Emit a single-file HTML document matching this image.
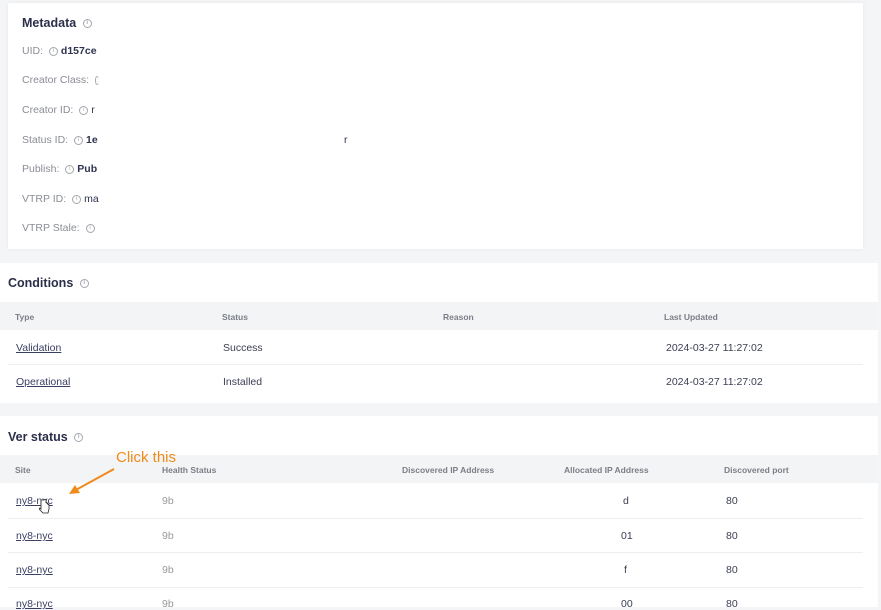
<!DOCTYPE html>
<html><head><style>
body{margin:0;width:881px;height:607px;overflow:hidden;background:#f4f5f6;font-family:"Liberation Sans",sans-serif;position:relative}
.a{position:absolute;white-space:nowrap}
.card{position:absolute;background:#fff}
.lbl{font-size:10.5px;color:#8a8d96}
.val{font-size:10.5px;color:#2e3350}
.i{display:inline-block;width:7px;height:7px;border:1px solid #a4a6ad;border-radius:50%;font-size:6px;line-height:7px;text-align:center;color:#a4a6ad;vertical-align:middle;margin:0 3px}
.h{font-size:12.5px;color:#2b2f4a;font-weight:bold}
.th{font-size:8.5px;color:#7b7e88;font-weight:bold}
.td{font-size:10.5px;color:#3a3e52}
.lnk{font-size:10.5px;color:#3a3e62;text-decoration:underline}
.hdr{position:absolute;background:#f3f4f5}
.line{position:absolute;height:1px;background:#eceef0}
</style></head><body>
<div class="card" style="left:8px;top:3px;width:855px;height:246px;box-shadow:0 0 3px #e6e7e9"></div>
<div class="a h" style="left:22px;top:16px">Metadata <span class="i">i</span></div>
<div class="a lbl" style="left:22px;top:45px">UID: <span class="i">i</span><span class="val" style="font-weight:bold">d157ce</span></div>
<div class="a lbl" style="left:22px;top:74px">Creator Class: <span class="i" style="border-right:none;width:3px"></span></div>
<div class="a lbl" style="left:22px;top:104px">Creator ID: <span class="i">i</span><span class="val">r</span></div>
<div class="a lbl" style="left:22px;top:134px">Status ID: <span class="i">i</span><span class="val" style="font-weight:bold">1e</span></div>
<div class="a val" style="left:344px;top:134px">r</div>
<div class="a lbl" style="left:22px;top:163px">Publish: <span class="i">i</span><span class="val" style="font-weight:bold">Pub</span></div>
<div class="a lbl" style="left:22px;top:193px">VTRP ID: <span class="i">i</span><span class="val">ma</span></div>
<div class="a lbl" style="left:22px;top:222px">VTRP Stale: <span class="i">i</span></div>

<div class="card" style="left:0;top:263px;width:878px;height:140px"></div>
<div class="a h" style="left:8px;top:276px">Conditions <span class="i">i</span></div>
<div class="hdr" style="left:0;top:302px;width:878px;height:28px"></div>
<div class="a th" style="left:15px;top:312px">Type</div>
<div class="a th" style="left:222px;top:312px">Status</div>
<div class="a th" style="left:443px;top:312px">Reason</div>
<div class="a th" style="left:664px;top:312px">Last Updated</div>
<div class="a lnk" style="left:16px;top:342px">Validation</div>
<div class="a td" style="left:223px;top:342px">Success</div>
<div class="a td" style="left:666px;top:342px">2024-03-27 11:27:02</div>
<div class="line" style="left:8px;top:364px;width:855px"></div>
<div class="a lnk" style="left:16px;top:376px">Operational</div>
<div class="a td" style="left:223px;top:376px">Installed</div>
<div class="a td" style="left:666px;top:376px">2024-03-27 11:27:02</div>

<div class="card" style="left:0;top:416px;width:878px;height:191px"></div>
<div class="a h" style="left:8px;top:430px">Ver status <span class="i">i</span></div>
<div class="hdr" style="left:0;top:455px;width:878px;height:28px"></div>
<div class="a th" style="left:15px;top:465px">Site</div>
<div class="a th" style="left:162px;top:465px">Health Status</div>
<div class="a th" style="left:402px;top:465px">Discovered IP Address</div>
<div class="a th" style="left:564px;top:465px">Allocated IP Address</div>
<div class="a th" style="left:724px;top:465px">Discovered port</div>
<div class="a lnk" style="left:16px;top:495px">ny8-nyc</div>
<div class="a td" style="left:162px;top:495px;color:#999">9b</div>
<div class="a td" style="left:623px;top:495px">d</div>
<div class="a td" style="left:726px;top:495px">80</div>
<div class="line" style="left:8px;top:518px;width:855px"></div>
<div class="a lnk" style="left:16px;top:530px">ny8-nyc</div>
<div class="a td" style="left:162px;top:530px;color:#999">9b</div>
<div class="a td" style="left:621px;top:530px">01</div>
<div class="a td" style="left:726px;top:530px">80</div>
<div class="line" style="left:8px;top:552px;width:855px"></div>
<div class="a lnk" style="left:16px;top:564px">ny8-nyc</div>
<div class="a td" style="left:162px;top:564px;color:#999">9b</div>
<div class="a td" style="left:624px;top:564px">f</div>
<div class="a td" style="left:726px;top:564px">80</div>
<div class="line" style="left:8px;top:587px;width:855px"></div>
<div class="a lnk" style="left:16px;top:598px">ny8-nyc</div>
<div class="a td" style="left:162px;top:598px;color:#999">9b</div>
<div class="a td" style="left:621px;top:598px">00</div>
<div class="a td" style="left:726px;top:598px">80</div>

<div class="a" style="left:116px;top:449px;font-size:15px;color:#f08a1c">Click this</div>
<svg class="a" style="left:66px;top:466px" width="52" height="30"><line x1="48" y1="3" x2="8" y2="25" stroke="#f08a1c" stroke-width="2"/><polygon points="3,28 14,27 9,19" fill="#f08a1c"/></svg>
<svg class="a" style="left:38px;top:498px" width="12" height="16"><path d="M3 2v9l-1-1c-1 0-1 1 0 2l3 3h5l1-4V7c0-1-1-1-1 0V6c0-1-1-1-1 0V5c0-1-1-1-1 0V2c0-1-2-1-2 0z" fill="#fff" stroke="#222" stroke-width="0.8"/></svg>
</body></html>
